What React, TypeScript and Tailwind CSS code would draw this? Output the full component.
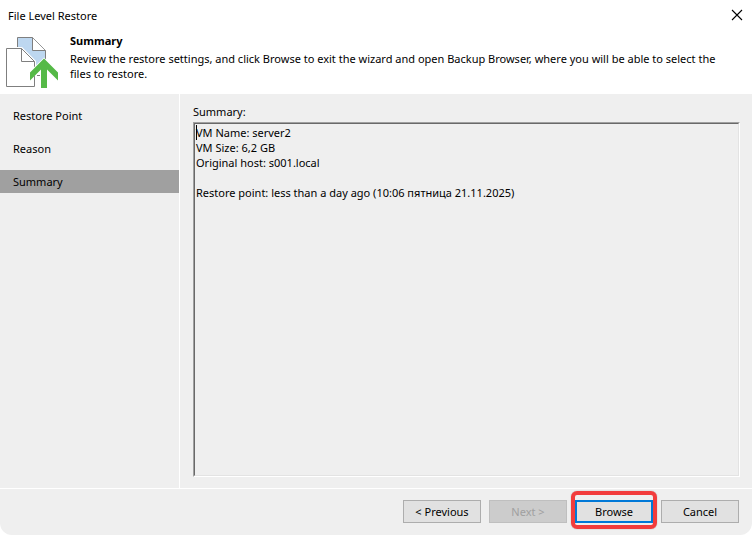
import { useState } from "react";

const steps = ["Restore Point", "Reason", "Summary"];

const summaryText = [
  "VM Name: server2",
  "VM Size: 6,2 GB",
  "Original host: s001.local",
  "",
  "Restore point: less than a day ago (10:06 пятница 21.11.2025)",
].join("\n");

const buttonClass = "h-[23px] w-[78px] border border-[#adadad] bg-[#e1e1e1] text-center leading-[15px]";

function RestoreIcon() {
  return (
    <svg width="54" height="52" viewBox="0 0 54 52" className="shrink-0" aria-hidden="true">
      <path d="M11.5 0.5H26.5L39.5 13.5V30H11.5Z" fill="#bdd7f0" />
      <path d="M26.5 0.5V13.5H39.5Z" fill="#fff" />
      <path d="M11.5 10V0.5H26.5V13.5H39.5V23" fill="none" stroke="#7f7f7f" />
      <path d="M26.5 0.5L39.5 13.5" fill="none" stroke="#7f7f7f" strokeWidth="0.8" />
      <path d="M0 10H16L30 24V51H0Z" fill="#fff" />
      <path d="M0.5 11.5H15.5L28.5 24.5V49.5H0.5Z" fill="#fff" stroke="#7f7f7f" />
      <path d="M15.5 11.5V24.5H28.5" fill="none" stroke="#7f7f7f" />
      <path d="M38 20.5L23 35V44L35 33V38H41V33L53 44V35Z" fill="#fff" />
      <path d="M28.5 40V49M31 38.5H34" stroke="#7f7f7f" />
      <path d="M38 21.5L52 35.5V43.5L41 32.5V51H35V32.5L24 43.5V35.5Z" fill="#55b947" />
    </svg>
  );
}

export default function App() {
  const [active, setActive] = useState("Summary");

  return (
    <div className="min-h-screen bg-white">
      <div className="flex min-h-screen flex-col overflow-hidden rounded-b-xl bg-[#efefef] font-['Noto_Sans','Open_Sans',sans-serif] text-[11px] leading-[15px] text-black">
        <header className="bg-white">
          <div className="flex h-[30px] items-center justify-between pr-[9px] pl-2">
            <h1>File Level Restore</h1>
            <button type="button" aria-label="Close">
              <svg width="12" height="12" viewBox="0 0 12 12" className="block">
                <path d="M1 1L11 11M11 1L1 11" stroke="#000" strokeWidth="1.1" />
              </svg>
            </button>
          </div>
          <div className="flex h-16 gap-[10px] pt-[7px] pl-[6px]">
            <RestoreIcon />
            <div className="-mt-1 pr-4">
              <h2 className="mb-[3px] font-bold">Summary</h2>
              <p>
                Review the restore settings, and click Browse to exit the wizard and open Backup Browser, where you will
                be able to select the files to restore.
              </p>
            </div>
          </div>
        </header>

        <div className="flex flex-1">
          <nav className="flex w-[180px] shrink-0 flex-col gap-[10px] border-r border-white pt-[10px]">
            {steps.map((step) => (
              <button
                key={step}
                type="button"
                onClick={() => setActive(step)}
                className={`h-[23px] pl-[13px] text-left ${active === step ? "bg-[#a0a0a0]" : ""}`}
              >
                {step}
              </button>
            ))}
          </nav>

          <main className="flex flex-1 flex-col pt-[10px] pr-3 pb-[11px] pl-[13px]">
            <label htmlFor="summary" className="mb-[3px]">
              Summary:
            </label>
            <div className="relative flex flex-1 border border-t-[#a0a0a0] border-r-white border-b-white border-l-[#a0a0a0]">
              <textarea
                id="summary"
                readOnly
                value={summaryText}
                className="flex-1 resize-none border border-t-[#696969] border-r-[#e3e3e3] border-b-[#e3e3e3] border-l-[#696969] bg-transparent px-px pt-px outline-none"
              />
              <span className="absolute top-[2px] left-[2px] h-[15px] w-px bg-black" />
            </div>
          </main>
        </div>

        <footer className="flex justify-end gap-2 border-t border-white pt-[11px] pr-[13px] pb-3">
          <button type="button" className={buttonClass}>
            &lt; Previous
          </button>
          <button
            type="button"
            disabled
            className="h-[23px] w-[78px] border border-[#bfbfbf] bg-[#cccccc] leading-[15px] text-[#a0a0a0]"
          >
            Next &gt;
          </button>
          <div className="relative">
            <button
              type="button"
              className="h-[23px] w-[78px] border-2 border-[#0078d7] bg-[#e1e1e1] text-center leading-[15px]"
            >
              Browse
            </button>
            <span className="pointer-events-none absolute -inset-x-1 -top-[9px] -bottom-[6px] rounded-md border-4 border-[#f23c3c] shadow-[0_0_1px_#777]" />
          </div>
          <button type="button" className={buttonClass}>
            Cancel
          </button>
        </footer>
      </div>
    </div>
  );
}
